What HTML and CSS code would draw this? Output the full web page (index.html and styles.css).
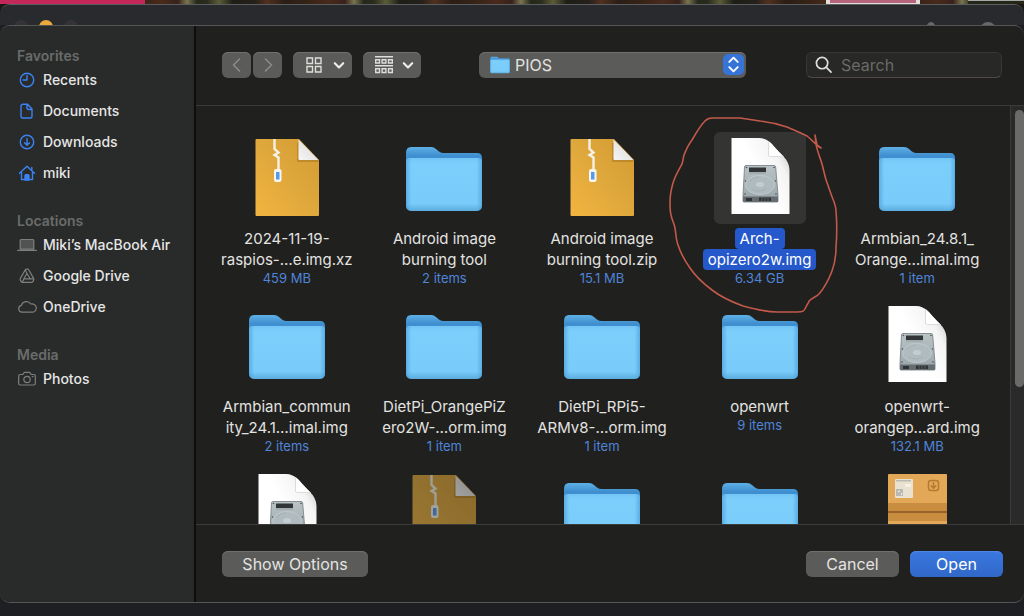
FILE: index.html
```html
<!DOCTYPE html>
<html lang="en">
<head>
<meta charset="utf-8">
<meta name="viewport" content="width=device-width, initial-scale=1">
<title>Open</title>
<link rel="stylesheet" href="styles.css">
</head>
<body>
<svg class="defs" aria-hidden="true">
  <defs>
    <linearGradient id="g-front" x1="0" y1="0" x2="0" y2="1"><stop offset="0" stop-color="#74c5f6"/><stop offset=".1" stop-color="#7ccefb"/><stop offset=".86" stop-color="#79cbf9"/><stop offset="1" stop-color="#5badde"/></linearGradient>
    <linearGradient id="g-side" x1="0" y1="0" x2="1" y2="0"><stop offset="0" stop-color="#4ea3dc" stop-opacity=".75"/><stop offset=".07" stop-color="#4ea3dc" stop-opacity="0"/><stop offset=".93" stop-color="#4ea3dc" stop-opacity="0"/><stop offset="1" stop-color="#4ea3dc" stop-opacity=".75"/></linearGradient>
    <linearGradient id="g-back" x1="0" y1="0" x2="0" y2="1"><stop offset="0" stop-color="#5fb0e6"/><stop offset=".17" stop-color="#3f8fd0"/><stop offset="1" stop-color="#4597d4"/></linearGradient>
    <linearGradient id="g-zip" x1="0" y1="1" x2="1" y2="0"><stop offset="0" stop-color="#f2b440"/><stop offset=".5" stop-color="#dfa83c"/><stop offset="1" stop-color="#d29a32"/></linearGradient>
    <linearGradient id="g-fold" x1="0" y1="1" x2="1" y2="0"><stop offset="0" stop-color="#f6f6f6"/><stop offset="1" stop-color="#d6d6d6"/></linearGradient>
    <linearGradient id="g-doc" x1=".5" y1=".5" x2="1" y2=".15"><stop offset="0" stop-color="#fff"/><stop offset=".6" stop-color="#f4f4f4"/><stop offset="1" stop-color="#c9c9c9"/></linearGradient>
    <linearGradient id="g-hd" x1="0" y1="0" x2="0" y2="1"><stop offset="0" stop-color="#b9c3c6"/><stop offset="1" stop-color="#9aa5a9"/></linearGradient>
  </defs>
  <symbol id="i-folder" viewBox="0 0 92 92">
    <path fill="url(#g-back)" d="M8 21q0-6 5-6h20q3 0 5 2l3 2.500q2 1.500 5 1.500h33q5 0 5 5v40H8z"/>
    <path fill="url(#g-front)" d="M8 30q0-4 4-4h68q4 0 4 4v43q0 6-6 6H14q-6 0-6-6z"/>
    <path fill="url(#g-side)" d="M8 30q0-4 4-4h68q4 0 4 4v43q0 6-6 6H14q-6 0-6-6z"/>
  </symbol>
  <symbol id="i-zip" viewBox="0 0 92 92">
    <path fill="url(#g-zip)" d="M15.500 7H58l20 21v55q0 1-1 1H15.500q-1 0-1-1V8q0-1 1-1z"/>
    <path fill="#8b6015" opacity=".35" d="M56 11v18q0 1 1 1h20l1-2L58 10z"/>
    <path fill="url(#g-fold)" d="M57.500 7.500 77.500 28H58.500q-1 0-1-1z"/>
    <path fill="none" stroke="#f6f1e6" stroke-width="2.400" d="M33.500 7v10l4 3.500-4 2.500 4 2.500v12"/>
    <rect x="33" y="37" width="7.500" height="13" rx="2" fill="#f8f5ee"/>
    <rect x="35" y="40" width="3.500" height="7.500" fill="#549bed"/>
  </symbol>
  <symbol id="i-disk" viewBox="0 0 92 92">
    <path fill="url(#g-doc)" d="M17.500 6H45q7 0 12 5.500 4 5 11 11.500 7.500 7 7.500 15v44h-58z"/>
    <path fill="#fff" d="M54.500 9v14q0 2 2 2H70q-4-4-9-9.500-3-4-6.500-6.500z"/>
    <path fill="none" stroke="#d3d3d3" stroke-width=".8" d="M54.500 9v14q0 1.500 2 1.500h13"/>
    <path fill="url(#g-hd)" stroke="#727b7e" stroke-width=".8" d="M32 33.500h28q1.500 0 1.700 1.500L64 63v6q0 1-1 1H30q-1 0-1-1v-6l1.500-28q0-1.500 1.500-1.500z"/>
    <rect x="35" y="35.500" width="17" height="4.500" fill="#313537"/>
    <path stroke="#828c8f" stroke-width=".7" d="M35 41h17"/>
    <ellipse cx="46" cy="53" rx="14.500" ry="9.500" fill="#b0bbbf" stroke="#c3cdd0" stroke-width=".8"/>
    <ellipse cx="46" cy="52.500" rx="4.500" ry="3" fill="#c3ccd0" stroke="#a3aeb2" stroke-width=".4"/>
    <path fill="none" stroke="#9ca7ab" stroke-width=".6" d="M36 50q2-5 9-5M38 57q7 4 14 0"/>
    <path fill="#656d70" d="M29 64.500h35V69q0 1-1 1H30q-1 0-1-1z"/>
    <path fill="#2f3335" d="M45 65.500h12V69H45zM32 66h6v3h-6z"/>
    <path stroke="#7c8487" stroke-width=".6" d="M48 65.500V69M51 65.500V69M54 65.500V69"/>
    <g fill="#4a5255"><circle cx="32.500" cy="35.500" r=".8"/><circle cx="60" cy="35.500" r=".8"/><circle cx="31.500" cy="49" r=".8"/><circle cx="61.500" cy="49" r=".8"/><circle cx="31" cy="62" r=".8"/><circle cx="62" cy="62" r=".8"/></g>
  </symbol>
  <symbol id="i-package" viewBox="0 0 92 92">
    <rect x="17" y="6" width="59" height="76" rx="1" fill="#e2a857"/>
    <path fill="#c98d40" d="M17 35h59v18H17z"/><path fill="#98622a" d="M17 43h59v2H17z"/>
    <rect x="24" y="11" width="18" height="19" rx="1" fill="#e9e2d1"/>
    <path fill="#b9b9b3" d="M25 12h15v1.500H25zM25 21h7v7h-7z"/><path fill="#f6f1e4" d="M27 23h2v1h-2zM30 25h1v2h-1zM34 16h6v3h-6z"/>
    <rect x="57.500" y="12.500" width="10" height="10" rx="2.500" fill="none" stroke="#b77a31" stroke-width="1.500"/>
    <path fill="none" stroke="#b77a31" stroke-width="1.600" d="M62.500 14v6M59.800 17.500l2.700 2.700 2.700-2.700"/>
  </symbol>
</svg>

<div class="desktop" aria-hidden="true">
  <span class="banner"></span><span class="photo"></span><span class="thumb-card"></span><span class="photo photo-end"></span><span class="card-edge"></span>
</div>
<div class="back-window">
  <div class="titlebar" aria-hidden="true">
    <span class="light"></span><span class="light light-min"></span><span class="light"></span>
    <span class="tool tool-small"></span><span class="tool"></span>
  </div>
  <main class="dialog">
    <nav class="sidebar">
      <h2>Favorites</h2>
      <ul>
        <li><a href="#"><svg class="blue" viewBox="0 0 20 20"><circle cx="10" cy="10" r="6.700"/><path d="M10 5.500V10H6"/></svg>Recents</a></li>
        <li><a href="#"><svg class="blue" viewBox="0 0 20 20"><path d="M6 3.200h4.500L15 8v7.500q0 1.500-1.500 1.500H5.500Q4 17 4 15.500V5q0-1.800 2-1.800zM10 3.500v3q0 2 2 2h3"/></svg>Documents</a></li>
        <li><a href="#"><svg class="blue" viewBox="0 0 20 20"><circle cx="10" cy="10" r="6.700"/><path d="M10 6.500v6.500M7.500 10.700l2.500 2.500 2.500-2.500"/></svg>Downloads</a></li>
        <li><a href="#"><svg class="blue" viewBox="0 0 20 20"><path d="M2.500 10.200 10 3.300l7.500 6.900M4.500 9v7.500h11V9M14.800 7V4.500"/><path class="solid" d="M8 17v-4.500q0-.8.800-.8h2.400q.8 0 .8.800V17z"/></svg>miki</a></li>
      </ul>
      <h2>Locations</h2>
      <ul>
        <li><a href="#"><svg class="gray" viewBox="0 0 20 20"><path class="screen" d="M3.200 14.200V5.500q0-1 1-1h11.600q1 0 1 1v8.700z"/><path d="M.7 15.400h18.600"/></svg>Miki’s MacBook Air</a></li>
        <li><a href="#"><svg class="gray" viewBox="0 0 20 20"><path d="M8 4.200q.6-1 1.600-1h.8q1 0 1.600 1l4.600 8.200q.6 1 0 2l-.6 1q-.6 1-1.800 1H5.800q-1.200 0-1.800-1l-.6-1q-.6-1 0-2z"/><path d="M10 7.500l3.200 5.300H6.800zM7 12.800l-1.500 3M10 7.500 8.300 4.300M13.200 12.800h3.300"/></svg>Google Drive</a></li>
        <li><a href="#"><svg class="gray" viewBox="0 0 20 20"><path d="M5 15.200a3.500 3.500 0 0 1-.6-6.900 5.200 5.200 0 0 1 9.400-1.300 4.200 4.200 0 1 1 1.200 8.200z"/></svg>OneDrive</a></li>
      </ul>
      <h2>Media</h2>
      <ul>
        <li><a href="#"><svg class="gray" viewBox="0 0 20 20"><path d="M3.200 5.500h2.600l1-1.500q.4-.6 1-.6h4.400q.6 0 1 .6l1 1.500h2.600q1.500 0 1.500 1.500v7.500q0 1.500-1.500 1.500H3.200q-1.500 0-1.500-1.500V7q0-1.500 1.500-1.500z"/><circle cx="10" cy="10.500" r="3.200"/><path d="M15.200 7.600h.8"/></svg>Photos</a></li>
      </ul>
    </nav>
    <section class="browser">
      <header class="toolbar">
        <div class="history">
          <button type="button" class="control nav" aria-label="Back" disabled><svg viewBox="0 0 16 16"><path d="M11 1.500 4.500 8l6.500 6.500"/></svg></button>
          <button type="button" class="control nav" aria-label="Forward" disabled><svg viewBox="0 0 16 16"><path d="M5 1.500 11.500 8 5 14.500"/></svg></button>
        </div>
        <button type="button" class="control view" aria-label="View as icons"><svg viewBox="1 1 16 16" class="glyph"><path d="M2 2h5.500v5.500H2zM10.500 2H16v5.500h-5.500zM2 10.500h5.500V16H2zM10.500 10.500H16V16h-5.500z"/></svg><svg viewBox="0 0 10 10" class="chevron"><path d="M1.500 3.500 5 7l3.500-3.500"/></svg></button>
        <button type="button" class="control view view-group" aria-label="Group items"><svg viewBox="0 0 18 18" class="glyph glyph-group"><path d="M0 .7h18M0 9.700h18M.7 3.700h3.800v3.300H.7zM7.100 3.700h3.800v3.300H7.100zM13.500 3.700h3.800v3.300h-3.800zM.7 12.700h3.800v3.800H.7zM7.100 12.700h3.800v3.800H7.100zM13.500 12.700h3.800v3.800h-3.800z"/></svg><svg viewBox="0 0 10 10" class="chevron"><path d="M1.500 3.500 5 7l3.500-3.500"/></svg></button>
        <div class="location control">
          <svg class="mini-folder" viewBox="7 14 78 66"><use href="#i-folder" width="92" height="92"/></svg>
          <select aria-label="Folder"><option>PIOS</option></select>
          <span class="stepper" aria-hidden="true"><svg viewBox="0 0 20 20"><path d="M6 7.500 10 3.500l4 4M6 12.500l4 4 4-4"/></svg></span>
        </div>
        <label class="search"><svg viewBox="0 0 18 18" aria-hidden="true"><circle cx="7.500" cy="7.500" r="6"/><path d="M12 12l5 5"/></svg><input type="search" placeholder="Search" aria-label="Search"></label>
      </header>
      <div class="pane">
        <ul class="files">
          <li class="file"><svg class="icon"><use href="#i-zip"/></svg><span class="name">2024-11-19-<br>raspios-…e.img.xz</span><span class="info">459 MB</span></li>
          <li class="file"><svg class="icon"><use href="#i-folder"/></svg><span class="name">Android image<br>burning tool</span><span class="info">2 items</span></li>
          <li class="file"><svg class="icon"><use href="#i-zip"/></svg><span class="name">Android image<br>burning tool.zip</span><span class="info">15.1 MB</span></li>
          <li class="file selected"><svg class="icon"><use href="#i-disk"/></svg><span class="name"><mark>Arch-<br>opizero2w.img</mark></span><span class="info">6.34 GB</span>
            <svg class="scribble" viewBox="0 0 172 200" aria-hidden="true"><path d="M146 18 148 28l4 3c-4-2-9-8-14-12-6-3-13-6-20-9-9-3-17-5-27-6-7-1-13-2-20-3H43c-4 0-5 1-7 3-5 5-9 12-13 19-4 5-6 10-8 15-1 4-1 6-2 9-4 7-7 12-9 19-2 7-3 12-3 19 0 5 0 9 1 13 1 5 3 8 4 13 1 6 1 12 3 17 3 9 7 16 12 23 6 9 14 16 22 22 9 7 20 12 31 16 11 3 22 6 34 6h20c7 0 7-1 9-5 1-3 3-4 3-6 3-3 7-4 10-7 6-7 10-15 13-23 3-8 4-15 4-24 1-12 1-24 0-36 0-6-3-11-5-17-4-10-7-20-9-30-2-7-5-13-6-20z"/></svg></li>
          <li class="file"><svg class="icon"><use href="#i-folder"/></svg><span class="name">Armbian_24.8.1_<br>Orange…imal.img</span><span class="info">1 item</span></li>
          <li class="file"><svg class="icon"><use href="#i-folder"/></svg><span class="name">Armbian_commun<br>ity_24.1…imal.img</span><span class="info">2 items</span></li>
          <li class="file"><svg class="icon"><use href="#i-folder"/></svg><span class="name">DietPi_OrangePiZ<br>ero2W-…orm.img</span><span class="info">1 item</span></li>
          <li class="file"><svg class="icon"><use href="#i-folder"/></svg><span class="name">DietPi_RPi5-<br>ARMv8-…orm.img</span><span class="info">1 item</span></li>
          <li class="file"><svg class="icon"><use href="#i-folder"/></svg><span class="name">openwrt</span><span class="info">9 items</span></li>
          <li class="file"><svg class="icon"><use href="#i-disk"/></svg><span class="name">openwrt-<br>orangep…ard.img</span><span class="info">132.1 MB</span></li>
          <li class="file"><svg class="icon"><use href="#i-disk"/></svg></li>
          <li class="file dimmed"><svg class="icon"><use href="#i-zip"/></svg></li>
          <li class="file"><svg class="icon"><use href="#i-folder"/></svg></li>
          <li class="file"><svg class="icon"><use href="#i-folder"/></svg></li>
          <li class="file"><svg class="icon"><use href="#i-package"/></svg></li>
        </ul>
        <div class="scrollbar" aria-hidden="true"><span class="thumb"></span></div>
      </div>
      <footer class="actions">
        <button type="button" class="control options">Show Options</button>
        <button type="button" class="control action">Cancel</button>
        <button type="button" class="control action primary">Open</button>
      </footer>
    </section>
  </main>
</div>
</body>
</html>
```
FILE: styles.css
```css
* { box-sizing: border-box; }
body {
  margin: 0;
  height: 100vh;
  display: flex;
  flex-direction: column;
  overflow: hidden;
  background: #1b1712;
  color: #e3e3e1;
  font-family: Inter, "Liberation Sans", sans-serif;
}
ul { list-style: none; margin: 0; padding: 0; }
button, select, input { font: inherit; color: inherit; }
.defs { position: absolute; width: 0; height: 0; }

.desktop { display: flex; flex: none; height: 4px; }
.banner { width: 145px; background: #c4285a; }
.photo { flex: 1; background: repeating-linear-gradient(90deg, #3a2416 0, #4a2a1c 17px, #38221a 33px, #7a7550 42px, #24281a 52px, #2a2c1c 62px, #5c5c38 74px, #1d1e16 88px, #26201a 110px, #52301f 122px, #2a1e16 140px, #3a2416 167px); }
.thumb-card { width: 94px; background: #b5647e; border: solid #e4dedb; border-width: 0 4px 1px; }
.photo-end { flex: none; width: 48px; }
.card-edge { width: 56px; background: #26251a; border-top: 1px solid #a3aaa4; }

.back-window {
  flex: 1;
  min-height: 0;
  display: flex;
  flex-direction: column;
  padding-bottom: 13px;
  background: #1e1f22;
  border-top: 1px solid #5c5f61;
  border-radius: 10px 10px 0 0;
}
.titlebar {
  flex: none;
  display: flex;
  gap: 11px;
  height: 20px;
  padding: 15px 28px 0 14px;
  overflow: hidden;
  background: #282a2d;
  border-radius: 10px 10px 0 0;
}
.light { flex: none; width: 14px; height: 14px; border-radius: 50%; background: #353336; }
.light-min { background: #e9a93b; }
.tool { flex: none; width: 16px; height: 16px; margin-top: 2px; border-radius: 50%; background: #66686a; }
.tool-small { width: 10px; margin-left: auto; margin-right: 33px; }

.dialog {
  flex: 1;
  min-height: 0;
  display: flex;
  overflow: hidden;
  background: #20201e;
  border: solid #555756;
  border-width: 1px 0;
  border-radius: 10px;
}
.sidebar {
  flex: none;
  width: 196px;
  padding: 21px 8px 0 17px;
  background: #292b2a;
  border-right: 2px solid #0d0d0d;
}
.sidebar h2 { margin: 0; font-size: 14px; line-height: 17px; font-weight: 600; color: #696b6a; }
.sidebar ul + h2 { margin-top: 24px; }
.sidebar a {
  display: flex;
  align-items: center;
  gap: 6px;
  height: 31px;
  font-size: 14px;
  font-weight: 500;
  color: #e6e6e6;
  text-decoration: none;
  white-space: nowrap;
}
.sidebar svg { flex: none; width: 20px; height: 20px; fill: none; stroke-width: 1.4; stroke-linejoin: round; stroke-linecap: round; }
.sidebar .blue { stroke: #3b82f2; }
.blue .solid { fill: #3b82f2; }
.sidebar .gray { stroke: #7d7f7e; stroke-width: 1.2; }
.gray .screen { fill: #515352; }

.browser { flex: 1; min-width: 0; display: flex; flex-direction: column; }
.toolbar {
  flex: none;
  display: flex;
  align-items: center;
  height: 80px;
  padding: 0 22px 2px 26px;
  border-bottom: 1px solid #3b3b39;
}
.control {
  height: 26px;
  padding: 0;
  border: 0;
  border-radius: 6px;
  background: #5b5b59;
  box-shadow: inset 0 1px #70706e;
}
.toolbar button { display: flex; align-items: center; justify-content: center; }
.history { display: flex; gap: 2px; }
.nav { width: 29px; }
.nav svg { width: 16px; height: 16px; fill: none; stroke: #8e8e8c; stroke-width: 1.4; }
.view { width: 59px; gap: 11px; margin-left: 11px; }
.toolbar .view { justify-content: flex-end; padding-right: 7px; }
.view-group { width: 58px; }
.glyph { width: 16px; height: 16px; fill: none; stroke: #dededc; stroke-width: 1.4; }
.glyph-group { width: 18px; height: 18px; }
.view-group { gap: 9px; }
.chevron { width: 12px; height: 12px; fill: none; stroke: #ececea; stroke-width: 1.8; stroke-linecap: round; stroke-linejoin: round; }
.location { position: relative; flex: 1; display: flex; align-items: center; margin: 0 60px 0 58px; }
.mini-folder { position: absolute; left: 11px; width: 20px; height: 18px; pointer-events: none; }
.location select {
  width: 100%;
  height: 26px;
  padding: 0 30px 0 36px;
  border: 0;
  background: none;
  appearance: none;
  font-size: 16px;
}
.stepper { position: absolute; right: 2px; display: flex; width: 21px; height: 21px; border-radius: 5px; background: #3674d8; pointer-events: none; }
.stepper svg { width: 100%; fill: none; stroke: #fff; stroke-width: 1.8; stroke-linecap: round; stroke-linejoin: round; }
.search {
  flex: none;
  display: flex;
  align-items: center;
  gap: 9px;
  width: 196px;
  height: 26px;
  padding: 0 8px;
  background: #282826;
  border: 1px solid #373735;
  border-bottom-color: #514744;
  border-radius: 6px;
}
.search svg { flex: none; width: 17px; height: 17px; fill: none; stroke: #dededc; stroke-width: 1.8; stroke-linecap: round; }
.search input { min-width: 0; flex: 1; padding: 0; border: 0; outline: 0; background: none; font-size: 16px; }
.search input::placeholder { color: #6a6a68; opacity: 1; }

.pane { flex: 1; min-height: 0; display: flex; overflow: hidden; }
.files {
  flex: 1;
  display: grid;
  grid-template-columns: repeat(5, 1fr);
  grid-auto-rows: 155px;
  row-gap: 13px;
  padding: 26px 14px 0 12px;
}
.file { position: relative; display: flex; flex-direction: column; align-items: center; text-align: center; }
.icon { flex: none; width: 92px; height: 92px; margin-bottom: 4px; }
.dimmed .icon { opacity: .6; }
.selected .icon { background: #343432; border-radius: 6px; }
.name { font-size: 15px; line-height: 21px; white-space: nowrap; }
.name mark { padding: 1px 5px; border-radius: 4px; background: #2458cb; color: #fff; -webkit-box-decoration-break: clone; box-decoration-break: clone; }
.info { font-size: 13px; line-height: 17px; color: #4f84da; }
.scribble { position: absolute; z-index: 1; top: -15px; left: calc(50% - 91px); width: 172px; height: 200px; overflow: visible; fill: none; stroke: #c2594b; stroke-width: 1.6; stroke-linejoin: round; pointer-events: none; }
.scrollbar { flex: none; width: 14px; padding: 4px 0 0 4px; background: #292a29; border-left: 1px solid #3b3b3a; }
.thumb { display: block; height: 67%; border-radius: 5px; background: #6a6a69; }

.actions {
  flex: none;
  display: flex;
  align-items: center;
  gap: 11px;
  height: 78px;
  padding: 0 21px 0 26px;
  border-top: 1px solid #3b3b39;
}
.actions .control { font-size: 16px; }
.options { width: 146px; margin-right: auto; }
.action { width: 93px; }
.actions .primary { background: linear-gradient(#3a78df, #3068c8); box-shadow: inset 0 1px #4c86e4; color: #fff; }
```
